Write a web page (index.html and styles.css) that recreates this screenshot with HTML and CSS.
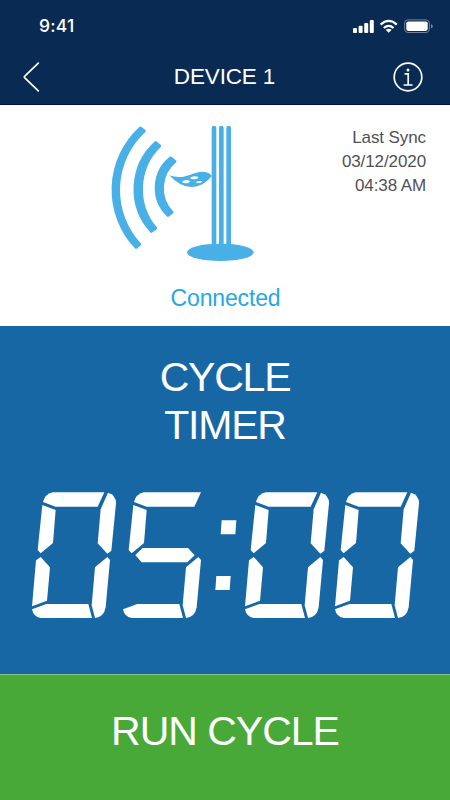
FILE: index.html
```html
<!DOCTYPE html>
<html lang="en">
<head>
<meta charset="utf-8">
<title>Device 1</title>
<link rel="stylesheet" href="styles.css">
</head>
<body>
<div class="screen">
  <header class="header">
    <div class="status">
      <span class="status-time">9:41</span>
      <svg class="status-icons" viewBox="0 0 82 18" aria-hidden="true">
        <g fill="#fff">
          <rect x="2" y="11" width="4" height="5" rx="1"/>
          <rect x="7.6" y="8.7" width="4" height="7.3" rx="1"/>
          <rect x="13.2" y="6" width="4" height="10" rx="1"/>
          <rect x="18.8" y="3" width="4" height="13" rx="1"/>
          <path d="M37.7 15.8 L40.7 12.8 Q37.7 10.5 34.7 12.8 Z"/>
        </g>
        <g fill="none" stroke="#fff" stroke-width="2.2">
          <path d="M32.8 11 Q37.7 6.8 42.6 11"/>
          <path d="M29.6 7.6 Q37.7 0.2 45.8 7.6"/>
        </g>
        <rect x="53.7" y="2.9" width="24.6" height="12.6" rx="3.2" fill="none" stroke="#7183a0"/>
        <rect x="55.3" y="4.5" width="21.4" height="9.4" rx="1.8" fill="#fff"/>
        <path d="M80 7v4.6Q81.8 10.8 81.8 9.3T80 7z" fill="#7183a0"/>
      </svg>
    </div>
    <nav class="nav">
      <svg class="nav-icon" viewBox="0 0 32 32" aria-label="Back"><path d="M22.3 2.2 8.8 15.1q-1 .9 0 1.8L22.3 29.8"/></svg>
      <h1 class="nav-title">DEVICE 1</h1>
      <svg class="nav-icon" viewBox="0 0 32 32" aria-label="Information"><circle cx="16" cy="16" r="13.8"/><path d="M13.2 12.8h3v11M12.3 24h7.6"/><circle class="dot" cx="16" cy="9" r="1.5"/></svg>
    </nav>
  </header>

  <section class="device">
    <svg class="device-art" viewBox="0 0 480 450" aria-hidden="true">
      <g class="waves">
        <path d="M121 39A251 251 0 0 0 108 397L119 388A241 241 0 0 1 133 48Z"/>
        <path d="M167 83A188 188 0 0 0 154 349L167 340A182 182 0 0 1 179 93Z"/>
        <path d="M212 129A114 114 0 0 0 204 301L216 292A105 105 0 0 1 225 139Z"/>
      </g>
      <g fill="#48b0e7">
        <path d="M208 181C244 194 267 179 289 173Q320 165 336 183C316 204 300 216 273 216Q240 216 208 181Z"/>
        <rect x="335" y="32" width="14" height="365" rx="7"/>
        <rect x="357" y="32" width="14" height="365" rx="7"/>
        <rect x="379" y="32" width="14" height="365" rx="7"/>
        <ellipse cx="361" cy="412" rx="100" ry="26"/>
      </g>
      <g fill="#fff">
        <path d="M269 189Q278 181 294 185Q297 188 291 191Q279 196 269 189Z"/>
        <path d="M245 201Q255 192 269 197Q272 200 265 204Q253 207 245 201Z"/>
        <path d="M287 203Q292 195 306 199Q308 203 297 204Z"/>
      </g>
    </svg>
    <div class="sync">
      <div>Last Sync</div>
      <div>03/12/2020</div>
      <div>04:38 AM</div>
    </div>
    <p class="connection">Connected</p>
  </section>

  <main class="timer">
    <h2 class="timer-title">CYCLE<br>TIMER</h2>
    <svg class="defs" aria-hidden="true">
      <defs>
        <path id="seg-a" d="M69 66Q75 42 98 37H253L233 80H107Z"/>
        <path id="seg-a-open" d="M69 66Q75 42 98 37H270L250 80H107Z"/>
        <path id="seg-f" d="M67 75 107 90 99 189 62 220 53 210Z"/>
        <path id="seg-b" d="M264 38Q288 44 288 70L274 212 262 221 233 190 242 88Z"/>
        <path id="seg-g" d="M73 225 95 204H231L251 226 229 247H92Z"/>
        <path id="seg-e" d="M62 231 90 262 81 362 36 379 48 241Z"/>
        <path id="seg-c" d="M262 231 270 240 257 382Q252 411 225 414L215 376 225 262Z"/>
        <path id="seg-d" d="M36 388 79 372H205L216 414H62Q40 410 36 388Z"/>
        <g id="segments-ring">
          <use href="#seg-a"/><use href="#seg-b"/><use href="#seg-c"/><use href="#seg-d"/><use href="#seg-e"/><use href="#seg-f"/>
        </g>
      </defs>
    </svg>
    <div class="clock" role="img" aria-label="05:00">
      <svg class="digit" viewBox="30 30 264 390"><use href="#segments-ring"/></svg>
      <svg class="digit" viewBox="30 30 264 390"><use href="#seg-a-open"/><use href="#seg-f"/><use href="#seg-g"/><use href="#seg-c"/><use href="#seg-d"/></svg>
      <svg class="colon" viewBox="299 30 66 390"><path d="M319 121H363L360 163H316ZM303 288H346L343 330H300Z"/></svg>
      <svg class="digit" viewBox="30 30 264 390"><use href="#segments-ring"/></svg>
      <svg class="digit" viewBox="30 30 264 390"><use href="#segments-ring"/></svg>
    </div>
  </main>

  <button class="run" type="button">RUN CYCLE</button>
</div>
</body>
</html>
```
FILE: styles.css
```css
* {
  box-sizing: border-box;
}

body {
  margin: 0;
  font-family: "Liberation Sans", Arial, sans-serif;
}

h1,
h2,
p {
  margin: 0;
  font-weight: 400;
}

svg {
  display: block;
}

.screen {
  display: grid;
  grid-template-rows: 105px 221px 348px 126px;
  width: 450px;
  height: 800px;
}

.header {
  background: #092a52;
  border-bottom: 1px solid #04104c;
  color: #fff;
}

.status {
  display: flex;
  justify-content: space-between;
  align-items: center;
  height: 52px;
  padding: 0 17px 0 39px;
}

.status-time {
  font: 500 17.5px/20px Inter, sans-serif;
  letter-spacing: 0.25px;
}

.status-icons {
  width: 82px;
  height: 18px;
}

.nav {
  display: grid;
  grid-template-columns: 32px 1fr 32px;
  align-items: center;
  height: 50px;
  padding: 0 26px 0 16px;
}

.nav-title {
  padding: 0 0 1px 9px;
  font-size: 22.5px;
  line-height: 25px;
  letter-spacing: -0.15px;
  text-align: center;
}

.nav-icon {
  width: 32px;
  height: 32px;
  fill: none;
  stroke: #fff;
  stroke-width: 1.7;
  stroke-linecap: round;
}

.nav-icon .dot {
  fill: #fff;
  stroke: none;
}

.device {
  display: grid;
  grid-template-columns: 160px 1fr;
  grid-template-rows: 150px 24px;
  row-gap: 20px;
  padding: 10px 24px 0 100px;
  background: #fff;
}

.device-art {
  width: 160px;
  height: 150px;
}

.waves {
  fill: #48b0e7;
  stroke: #48b0e7;
  stroke-width: 9;
  stroke-linejoin: round;
}

.sync {
  padding-top: 11px;
  color: #505156;
  font-size: 17px;
  line-height: 24px;
  letter-spacing: -0.1px;
  text-align: right;
}

.connection {
  grid-column: 1 / -1;
  margin: 1px 0 0 -75px;
  color: #24a9e3;
  font-size: 23px;
  line-height: 24px;
  letter-spacing: -0.15px;
  text-align: center;
}

.timer {
  padding-top: 27px;
  background: #1767a5;
  color: #fff;
}

.timer-title {
  font-size: 41px;
  line-height: 48px;
  letter-spacing: -1.2px;
  text-align: center;
}

.defs {
  width: 0;
  height: 0;
}

.clock {
  display: flex;
  gap: 2.67px;
  margin-top: 41px;
  padding-left: 30px;
  fill: #fff;
}

.digit {
  flex: none;
  width: 88px;
  height: 130px;
}

.colon {
  flex: none;
  width: 22px;
  height: 130px;
  margin: 0 3.33px;
}

.run {
  padding: 0 0 14px;
  border: 0;
  border-top: 1px solid #86c17f;
  background: #48a938;
  color: #fff;
  font: 400 41px/48px "Liberation Sans", Arial, sans-serif;
  letter-spacing: -1px;
}
```
